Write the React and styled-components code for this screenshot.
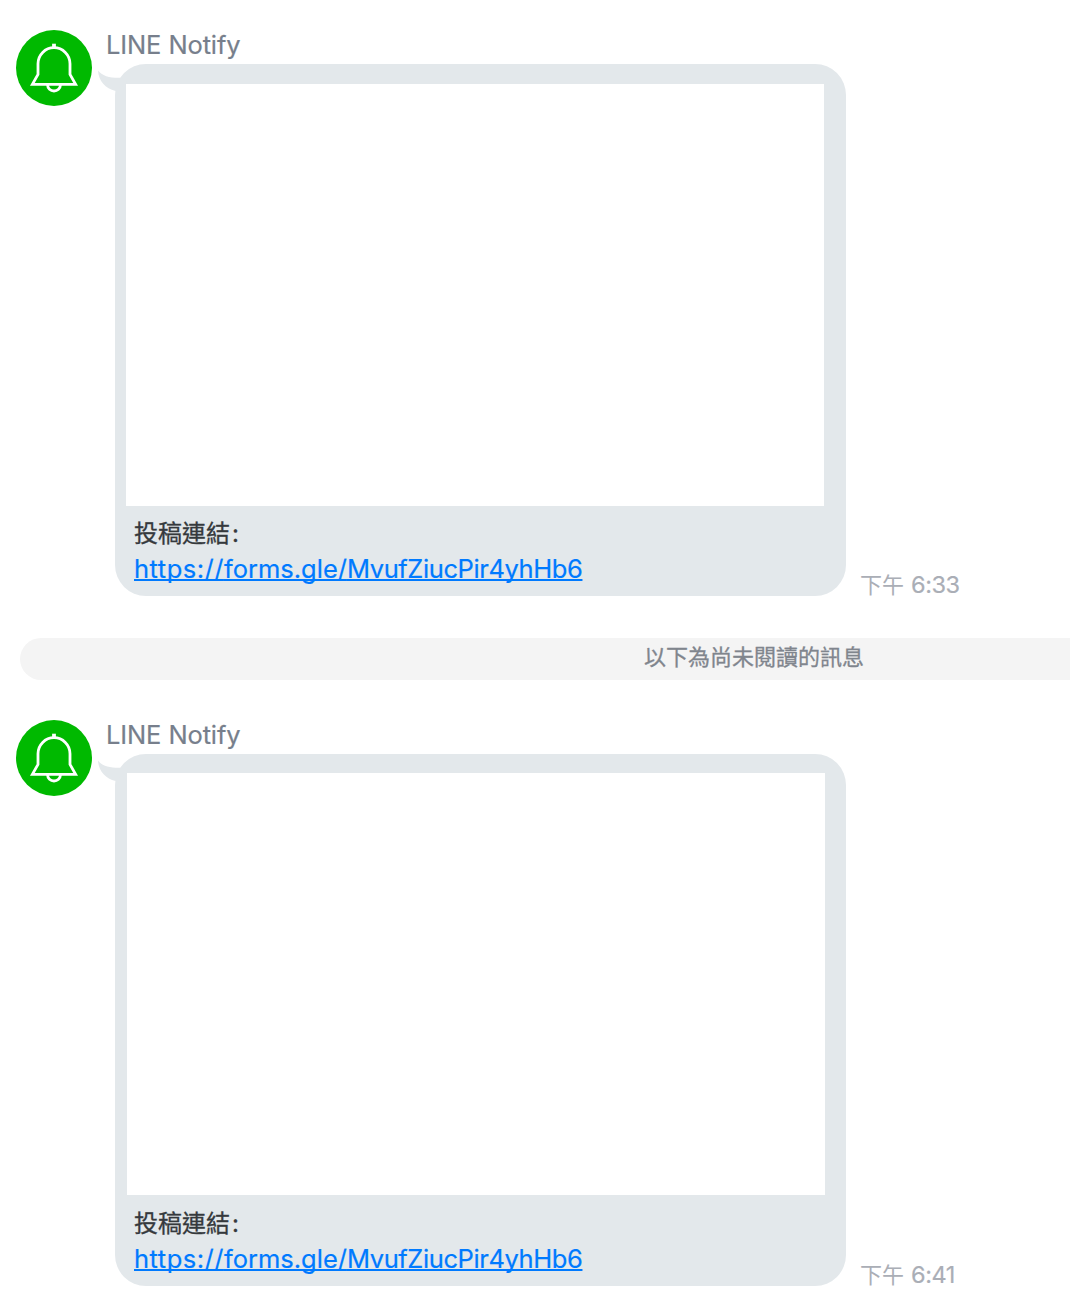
import React from 'react';
import styled, { createGlobalStyle } from 'styled-components';

const GlobalStyle = createGlobalStyle`
  * { box-sizing: border-box; }
  body {
    margin: 0;
    background: #fff;
    overflow: hidden;
    font-family: Inter, "Noto Sans CJK TC", sans-serif;
  }
`;

const Chat = styled.main`
  display: flex;
  flex-direction: column;
  height: 1312px;
  padding-top: 30px;
  background: #fff;
  overflow: hidden;
`;

const Message = styled.article`
  display: flex;
  align-items: flex-start;
  height: 566px;
  padding-left: 16px;
`;

const Avatar = styled.svg`
  flex: none;
  width: 76px;
  height: 76px;
`;

const Body = styled.div`
  margin-left: 14px;
`;

const Sender = styled.div`
  height: 34px;
  line-height: 30px;
  font-size: 25.5px;
  letter-spacing: -0.12px;
  color: #777f8c;
  -webkit-text-stroke: 0.2px currentColor;
  white-space: nowrap;
`;

const BubbleRow = styled.div`
  display: flex;
  align-items: flex-end;
  margin-left: 9px;
`;

const Bubble = styled.div`
  position: relative;
  display: flex;
  flex-direction: column;
  width: 731px;
  height: 532px;
  padding: ${({ $inset }) => `${$inset.top}px 0 0 ${$inset.left}px`};
  border-radius: 31px;
  background: #e3e8eb;
`;

const Tail = styled.svg`
  position: absolute;
  left: -17px;
  top: 6px;
  width: 30px;
  height: 24px;
`;

const Picture = styled.div`
  flex: none;
  width: 698px;
  height: 422px;
  background: #fff;
`;

const Caption = styled.div`
  margin-top: ${({ $shift }) => 10 + $shift.y}px;
  margin-left: ${({ $shift }) => 8 + $shift.x}px;
  color: #35393d;
  font-size: 24px;
  line-height: 36px;
  white-space: nowrap;
`;

const Label = styled.div`
  height: 35px;
  -webkit-text-stroke: 0.3px currentColor;
`;

const Colon = styled.span`
  margin-left: 2px;
`;

const Link = styled.a`
  display: block;
  width: max-content;
  height: 36px;
  font-size: 25.5px;
  line-height: 36px;
  color: #007aff;
  -webkit-text-stroke: 0.2px currentColor;
  text-decoration: underline;
  text-decoration-thickness: 2px;
  text-underline-offset: 1px;
  text-decoration-skip-ink: none;
`;

const Part = styled.span`
  letter-spacing: ${({ $track }) => $track}px;
`;

const Time = styled.time`
  margin: 0 0 -4px 14px;
  display: flex;
  align-items: baseline;
  gap: 7px;
  color: #aaaeb6;
  font-size: 22px;
  line-height: 30px;
  white-space: nowrap;
`;

const Clock = styled.span`
  font-size: 23.5px;
  letter-spacing: -0.45px;
  -webkit-text-stroke: 0.2px currentColor;
`;

const Unread = styled.div`
  flex: none;
  display: flex;
  align-items: center;
  justify-content: center;
  width: 1468px;
  height: 42px;
  margin: 42px 0 40px 20px;
  padding-bottom: 4px;
  border-radius: 21px;
  background: #f4f4f4;
  color: #80858d;
  font-size: 22px;
  line-height: 38px;
  -webkit-text-stroke: 0.3px currentColor;
`;

function BellAvatar() {
  return (
    <Avatar viewBox="0 0 76 76" aria-label="LINE Notify">
      <circle cx="38" cy="38" r="38" fill="#00b900" />
      <g fill="none" stroke="#fff" strokeWidth="2.8">
        <path d="M38 13.7V18" strokeWidth="3.8" />
        <path d="M22 44.5V33.7A16 16 0 0 1 54 33.7V44.5L59.6 54.3H16.4Z" />
        <path d="M31.6 55A6.4 6 0 0 0 44.4 55" />
      </g>
    </Avatar>
  );
}

function ChatMessage({ inset, hour }) {
  const shift = { x: 11 - inset.left, y: 20 - inset.top };
  return (
    <Message>
      <BellAvatar />
      <Body>
        <Sender>LINE Notify</Sender>
        <BubbleRow>
          <Bubble $inset={inset}>
            <Tail viewBox="0 0 30 24">
              <path
                d="M0 0.5C4 6 12 8 22 7.8L30 12L17.5 21C7.5 18.5 0.5 11 0 0.5Z"
                fill="#e3e8eb"
              />
            </Tail>
            <Picture />
            <Caption $shift={shift}>
              <Label>
                投稿連結<Colon>:</Colon>
              </Label>
              <Link href="https://forms.gle/MvufZiucPir4yhHb6">
                <Part $track={0.5}>https://</Part>
                <Part $track={0}>forms.gle/</Part>
                <Part $track={-0.4}>MvufZiucPir4yhHb6</Part>
              </Link>
            </Caption>
          </Bubble>
          <Time>
            下午<Clock>{hour}</Clock>
          </Time>
        </BubbleRow>
      </Body>
    </Message>
  );
}

export default function App() {
  return (
    <>
      <GlobalStyle />
      <Chat>
        <ChatMessage inset={{ top: 20, left: 11 }} hour="6:33" />
        <Unread>以下為尚未閱讀的訊息</Unread>
        <ChatMessage inset={{ top: 19, left: 12 }} hour="6:41" />
      </Chat>
    </>
  );
}
